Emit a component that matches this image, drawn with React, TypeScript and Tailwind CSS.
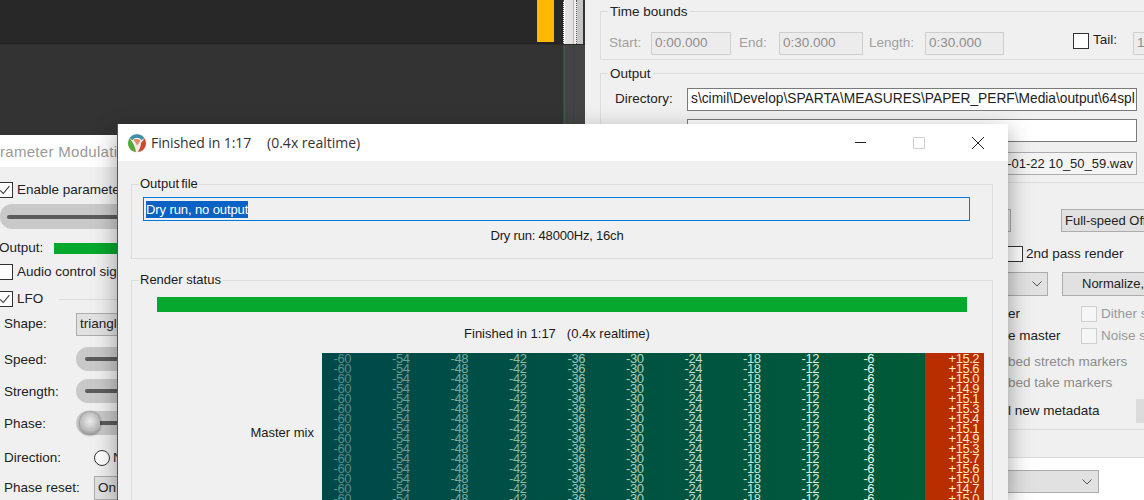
import React from 'react';

const sans = '[font-family:"Liberation_Sans",Arial,sans-serif]';

function CheckBox({ checked = false, dim = false }: { checked?: boolean; dim?: boolean }) {
  return (
    <span className={`shrink-0 w-4 h-4 flex items-center justify-center border ${dim ? 'border-[#cfcfcf] bg-[#f6f6f6]' : 'border-[#333] bg-white'}`}>
      {checked && (
        <svg viewBox="0 0 16 16" className="w-[14px] h-[14px]" fill="none" stroke="#333" strokeWidth="1.2">
          <path d="M2.5 8.5 L6 12 L13 3.5" />
        </svg>
      )}
    </span>
  );
}

function Chevron() {
  return (
    <svg viewBox="0 0 10 6" className="w-[10px] h-[6px]" fill="none" stroke="#555" strokeWidth="1">
      <path d="M0.5 0.5 L5 5 L9.5 0.5" />
    </svg>
  );
}

function DarkWindow() {
  return (
    <div className="absolute left-0 top-0 w-[585px] h-[500px] flex bg-[#333333]">
      <div className="w-[563px] flex flex-col">
        <div className="h-[42px] bg-[#282828] shrink-0">
          <div className="ml-[537px] w-[17px] h-[44px] bg-[#fdb900] border-b border-[#1c1c1c]" />
        </div>
        <div className="h-[3px] bg-[#242424] border-b border-[#2c2c2c] shrink-0" />
        <div className="flex-1 bg-[#333333]" />
      </div>
      <div className="w-[22px] flex flex-col">
        <div className="h-[44px] flex bg-[#d8d8d8]">
          <div className="w-[2px] border-l border-dotted border-[#444] bg-white" />
          <div className="w-[8px] bg-[#e2e2e2]" />
          <div className="w-px bg-[#c9b0b0]" />
          <div className="w-[3px] bg-[#efefef] border-r border-dotted border-[#555]" />
          <div className="w-[6px] bg-[#c6c6c6]" />
          <div className="flex-1 bg-[#333]" />
        </div>
        <div className="flex-1 flex bg-[#444444] border-t border-[#2a2a2a]">
          <div className="w-[2px] border-r border-[#3f5a50]" />
          <div className="w-[8px]" />
          <div className="w-px bg-[#7d2525]" />
          <div className="flex-1" />
        </div>
      </div>
    </div>
  );
}

function SliderRow({ label, knob = false, className }: { label: string; knob?: boolean; className: string }) {
  return (
    <div className={`${className} h-[24px] flex items-center pl-[4px]`}>
      <span className="w-[72px] shrink-0 pt-[3px]">{label}</span>
      <div className="flex-1 h-[24px] rounded-l-[12px] bg-[#c9c9c9] flex items-center pl-[9px] relative">
        <div className="flex-1 h-[4px] bg-[#5c5c5c] rounded-l" />
        {knob && (
          <div className="absolute left-[4px] top-[1px] w-[20px] h-[23px] rounded-full bg-[radial-gradient(circle_at_50%_40%,#ececec,#b8b8b8_60%,#6e6e6e)] shadow-[0_0_3px_rgba(0,0,0,0.6)]" />
        )}
      </div>
    </div>
  );
}

function ParamWindow() {
  return (
    <div className={`absolute left-0 top-[135px] w-[125px] h-[365px] overflow-hidden bg-[#f0f0f0] text-[13.5px] text-[#222] ${sans}`}>
      <div className="h-[32px] bg-white flex items-center text-[#9a9a9a] text-[15px] whitespace-nowrap tracking-[0.3px] pt-[3px]">
        <span className="-ml-[19px] shrink-0">Parameter Modulation</span>
      </div>
      <div className="mt-[15px] -ml-[3px] flex items-center gap-1 h-[16px] whitespace-nowrap">
        <CheckBox checked />
        <span>Enable parameter modulation</span>
      </div>
      <div className="mt-[6px] h-[25px] rounded-l-[12px] bg-[#c9c9c9] flex items-center pl-[7px]">
        <div className="flex-1 h-[4px] bg-[#5c5c5c] rounded-l" />
      </div>
      <div className="mt-[13px] h-[12px] flex items-center -ml-px">
        <span className="w-[55px] shrink-0">Output:</span>
        <div className="flex-1 h-[11px] bg-[#06a82d]" />
      </div>
      <div className="mt-[10px] -ml-[3px] flex items-center gap-1 h-[16px] whitespace-nowrap">
        <CheckBox />
        <span>Audio control signal (sidechain)</span>
      </div>
      <div className="mt-[11px] -ml-[3px] flex items-center gap-1 h-[16px]">
        <CheckBox checked />
        <span>LFO</span>
        <div className="flex-1 ml-[12px] h-px bg-[#dcdcdc]" />
      </div>
      <div className="mt-[6px] h-[23px] flex items-center pl-[4px]">
        <span className="w-[72px] shrink-0">Shape:</span>
        <div className="flex-1 h-[23px] bg-[#e1e1e1] border border-[#adadad] flex items-center pl-[3px] whitespace-nowrap overflow-hidden">triangle</div>
      </div>
      <SliderRow label="Speed:" className="mt-[11px]" />
      <SliderRow label="Strength:" className="mt-[8px]" />
      <SliderRow label="Phase:" className="mt-[8px]" knob />
      <div className="mt-[15px] h-[16px] flex items-center pl-[4px] whitespace-nowrap">
        <span className="w-[90px] shrink-0 pt-px">Direction:</span>
        <span className="w-4 h-4 rounded-full border border-[#333] bg-white shrink-0" />
        <span className="ml-[3px]">Normal</span>
      </div>
      <div className="mt-[10px] h-[24px] flex items-center pl-[4px] whitespace-nowrap">
        <span className="w-[90px] shrink-0">Phase reset:</span>
        <div className="flex-1 h-[24px] bg-[#e1e1e1] border border-[#adadad] flex items-center pl-[3px] overflow-hidden">On seek/loop</div>
      </div>
    </div>
  );
}

function TimeField({ value }: { value: string }) {
  return (
    <div className="h-[23px] border border-[#cfcfcf] bg-[#ececec] flex items-center pl-[3px] text-[#8e8e8e] w-full">{value}</div>
  );
}

function RenderWindow() {
  return (
    <div className={`absolute left-[585px] top-0 w-[559px] h-[500px] overflow-hidden bg-[#f0f0f0] text-[13.5px] text-[#222] flex flex-col ${sans}`}>
      <fieldset className="mt-[4px] ml-[15px] -mr-[20px] h-[56px] border border-[#dcdcdc] shrink-0">
        <legend className="ml-[7px] px-[2px] leading-[15px] text-[13.5px]">Time bounds</legend>
        <div className="mt-[13px] flex items-center text-[#a0a0a0]">
          <span className="w-[50px] pl-[8px] shrink-0">Start:</span>
          <div className="w-[80px] shrink-0"><TimeField value="0:00.000" /></div>
          <span className="w-[48px] pl-[8px] shrink-0">End:</span>
          <div className="w-[84px] shrink-0"><TimeField value="0:30.000" /></div>
          <span className="w-[62px] pl-[6px] shrink-0">Length:</span>
          <div className="w-[79px] shrink-0"><TimeField value="0:30.000" /></div>
          <div className="ml-[69px] flex items-center gap-1 text-[#222] -mt-[6px] shrink-0">
            <CheckBox />
            <span>Tail:</span>
          </div>
          <div className="ml-[16px] w-[60px] h-[23px] border border-[#cfcfcf] bg-[#ececec] flex items-center pl-[3px] text-[#8e8e8e] shrink-0">1000</div>
        </div>
      </fieldset>
      <fieldset className="mt-[6px] ml-[15px] -mr-[20px] border border-[#dcdcdc] h-[117px] shrink-0">
        <legend className="ml-[7px] px-[2px] leading-[15px]">Output</legend>
        <div className="mt-[7px] flex items-center h-[23px]">
          <span className="w-[87px] pl-[14px] shrink-0">Directory:</span>
          <div className="w-[450px] h-[23px] border border-[#7a7a7a] bg-white pl-[3px] flex items-center whitespace-nowrap overflow-hidden shrink-0 -ml-px text-[13.75px]">s\cimil\Develop\SPARTA\MEASURES\PAPER_PERF\Media\output\64spl</div>
        </div>
        <div className="mt-[8px] ml-[86px] w-[450px] h-[23px] border border-[#7a7a7a] bg-white" />
        <div className="mt-[10px] ml-[86px] w-[450px] h-[23px] border border-[#adadad] bg-[#f4f4f4] flex items-center justify-end pr-[3px] whitespace-nowrap overflow-hidden text-[13px]">2025-01-22 10_50_59.wav</div>
      </fieldset>
      <div className="mt-[26px] flex items-center h-[23px] shrink-0">
        <div className="ml-[350px] w-[76px] h-[23px] border border-[#adadad] bg-[#e1e1e1] shrink-0" />
        <div className="ml-[50px] w-[120px] h-[23px] border border-[#adadad] bg-[#e1e1e1] flex items-center pl-[3px] whitespace-nowrap shrink-0 text-[13px]">Full-speed Offline</div>
      </div>
      <div className="mt-[14px] ml-[422px] flex items-center gap-[3px] h-[16px] shrink-0">
        <CheckBox />
        <span>2nd pass render</span>
      </div>
      <div className="mt-[10px] flex items-center h-[24px] shrink-0">
        <div className="ml-[350px] w-[113px] h-[24px] border border-[#adadad] bg-[#e1e1e1] flex items-center justify-end pr-[5px] shrink-0">
          <Chevron />
        </div>
        <div className="ml-[14px] w-[120px] h-[24px] border border-[#adadad] bg-[#e1e1e1] flex items-center pl-[19px] whitespace-nowrap shrink-0 text-[13px]">Normalize, Limit...</div>
      </div>
      <div className="mt-[10px] flex items-center h-[16px] whitespace-nowrap shrink-0">
        <span className="ml-[423px] w-[73px] shrink-0">er</span>
        <CheckBox dim />
        <span className="ml-[4px] text-[#9a9a9a]">Dither stems</span>
      </div>
      <div className="mt-[6px] flex items-center h-[16px] whitespace-nowrap shrink-0">
        <span className="ml-[423px] w-[73px] shrink-0">e master</span>
        <CheckBox dim />
        <span className="ml-[4px] text-[#9a9a9a]">Noise shape</span>
      </div>
      <div className="mt-[10px] ml-[423px] h-[16px] flex items-center whitespace-nowrap text-[#8c8c8c] shrink-0">bed stretch markers</div>
      <div className="mt-[5px] ml-[423px] h-[16px] flex items-center whitespace-nowrap text-[#8c8c8c] shrink-0">bed take markers</div>
      <div className="mt-[8px] h-[24px] flex items-center whitespace-nowrap shrink-0">
        <span className="ml-[423px] w-[128px] shrink-0">l new metadata</span>
        <div className="w-[30px] h-[24px] bg-[#dcdcdc] shrink-0" />
      </div>
      <div className="mt-[6px] h-[29px] border-t border-[#dcdcdc] border-b shrink-0" />
      <div className="flex-1 bg-white">
        <div className="mt-[12px] ml-[350px] w-[164px] h-[23px] border border-[#adadad] bg-[#e1e1e1] flex items-center justify-end pr-[6px]">
          <Chevron />
        </div>
      </div>
    </div>
  );
}

function ReaperLogo() {
  return (
    <svg viewBox="0 0 20 20" className="w-5 h-5 shrink-0">
      <circle cx="10" cy="10" r="9.5" fill="#f3ece4" />
      <path d="M2.6 5.2 A9 9 0 0 1 17.4 5.2 L14.6 7 A6 6 0 0 0 5.4 7 Z" fill="#3d8fa8" />
      <path d="M2.6 5.2 A9 9 0 0 0 9 19.2 C8.5 15 6 9 2.6 5.2Z" fill="#52a83a" />
      <path d="M17.4 5.2 A9 9 0 0 1 11 19.2 C12.5 16 14 13 14.2 9.5 C15.5 8.5 16.5 7 17.4 5.2Z" fill="#c94a32" />
      <path d="M6 6.5 C9 5.5 12 6 13.5 7.5 C12.5 9.5 11.5 10.5 10 12.5 C9 10 7.5 8 6 6.5Z" fill="#d96a50" opacity="0.75" />
    </svg>
  );
}

const scale = [
  { label: '-60', color: 'text-[#5c8c86]' },
  { label: '-54', color: 'text-[#6c9c94]' },
  { label: '-48', color: 'text-[#7caaa0]' },
  { label: '-42', color: 'text-[#8cb8ac]' },
  { label: '-36', color: 'text-[#9cc6b8]' },
  { label: '-30', color: 'text-[#acd2c2]' },
  { label: '-24', color: 'text-[#bcdccc]' },
  { label: '-18', color: 'text-[#cce6d6]' },
  { label: '-12', color: 'text-[#dceee0]' },
  { label: '-6', color: 'text-[#e8f6e8]' },
];

const peaks = ['+15.2', '+15.6', '+15.0', '+14.9', '+15.1', '+15.3', '+15.4', '+15.1', '+14.9', '+15.3', '+15.7', '+15.6', '+15.0', '+14.7', '+15.0'];

function Meter() {
  return (
    <div className="h-[147px] flex overflow-hidden leading-[10px] text-[13px] tracking-[-0.5px] w-[662px] shrink-0">
      <div className="w-[603px] bg-gradient-to-r from-[#00494a] to-[#005b38] overflow-hidden pt-px">
        <div className="flex -ml-[9px]">
          {scale.map((col) => (
            <div key={col.label} className={`w-[58.5px] shrink-0 text-center ${col.color}`}>
              {peaks.map((_, i) => (
                <div key={i} className="h-[10px]">{col.label}</div>
              ))}
            </div>
          ))}
        </div>
      </div>
      <div className="flex-1 bg-[#b82e00] text-[#ffe9c8] text-right pr-[5px] pt-px">
        {peaks.map((p, i) => (
          <div key={i} className="h-[10px]">{p}</div>
        ))}
      </div>
    </div>
  );
}

function FinishedWindow() {
  return (
    <div className={`absolute left-[117px] top-[124px] w-[891px] h-[376px] bg-[#f0f0f0] border-l border-[#555] text-[13px] text-[#1a1a1a] shadow-[0_8px_22px_rgba(0,0,0,0.38)] ${sans}`}>
      <div className="h-[37px] bg-white flex items-center pl-[9px]">
        <ReaperLogo />
        <div className="ml-[4px] flex gap-[16px] text-[14px] text-[#333] [font-family:'Open_Sans',sans-serif]">
          <span className="tracking-[-0.1px]">Finished in 1:17</span>
          <span>(0.4x realtime)</span>
        </div>
        <div className="ml-auto flex items-center">
          <div className="w-[11px] h-px bg-[#222]" />
          <div className="ml-[47px] w-[12px] h-[12px] border border-[#cfcfcf]" />
          <svg viewBox="0 0 14 14" className="ml-[46px] mr-[23px] w-[14px] h-[14px]" fill="none" stroke="#222" strokeWidth="1">
            <path d="M1 1 L13 13 M13 1 L1 13" />
          </svg>
        </div>
      </div>
      <fieldset className="mt-[16px] ml-[13px] w-[862px] h-[82px] border border-[#dcdcdc]">
        <legend className="ml-[7px] px-px leading-[14px] [word-spacing:-1.5px]">Output file</legend>
        <div className="mt-[6px] ml-[11px] w-[827px] h-[24px] border border-[#0078d7] bg-[#f0f0f0] flex items-center pl-[2px]">
          <span className="bg-[#0a62c4] text-white leading-[17px] tracking-[-0.1px]">Dry run, no output</span>
        </div>
        <div className="mt-[5px] text-center w-[850px] tracking-[-0.2px]">Dry run: 48000Hz, 16ch</div>
      </fieldset>
      <fieldset className="mt-[14px] ml-[13px] w-[862px] h-[230px] border border-[#dcdcdc]">
        <legend className="ml-[7px] px-px leading-[14px]">Render status</legend>
        <div className="mt-[10px] ml-[25px] w-[810px] h-[15px] bg-[#06a82d]" />
        <div className="mt-[12px] text-center w-[850px] flex justify-center gap-[11px]">
          <span>Finished in 1:17</span>
          <span>(0.4x realtime)</span>
        </div>
        <div className="mt-[9.5px] flex">
          <div className="w-[190px] text-right pr-[8px] pt-[70px] shrink-0">Master mix</div>
          <Meter />
        </div>
      </fieldset>
    </div>
  );
}

export default function App() {
  return (
    <div className="relative w-[1144px] h-[500px] overflow-hidden bg-[#333]">
      <DarkWindow />
      <RenderWindow />
      <ParamWindow />
      <FinishedWindow />
    </div>
  );
}
